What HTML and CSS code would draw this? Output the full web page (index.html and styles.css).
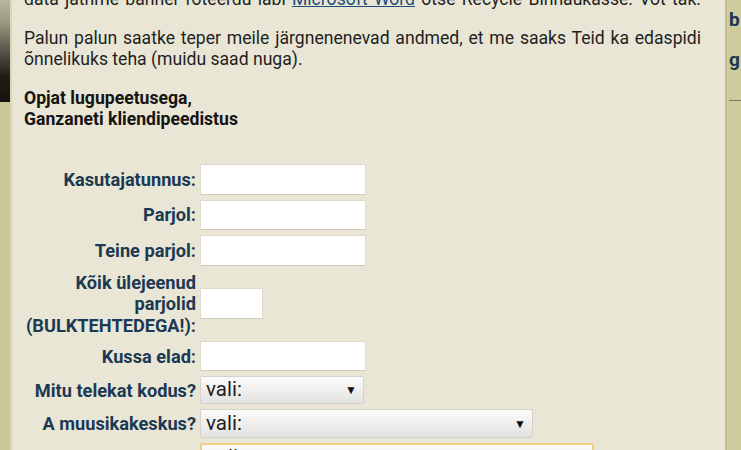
FILE: index.html
```html
<!DOCTYPE html>
<html lang="et">
<head>
<meta charset="utf-8">
<title>Ganzanet</title>
<link rel="stylesheet" href="styles.css">
</head>
<body>
<div class="page">
  <div class="side-left"><div class="photo"></div></div>
  <main class="panel">
    <p class="intro"><span class="jline">data jäthme banner roteerdu labi <a href="#">Microsoft Word</a> otse Recycle Binnaukasse. Vot tak.</span></p>
    <p class="para"><span class="jline">Palun palun saatke teper meile järgnenenevad andmed, et me saaks Teid ka edaspidi</span>õnnelikuks teha (muidu saad nuga).</p>
    <p class="sign">Opjat lugupeetusega,<br>Ganzaneti kliendipeedistus</p>
    <form class="form">
      <label class="lbl">Kasutajatunnus:</label>
      <div class="field"><input class="inp wide" type="text"></div>
      <label class="lbl">Parjol:</label>
      <div class="field"><input class="inp wide h30" type="password"></div>
      <label class="lbl">Teine parjol:</label>
      <div class="field"><input class="inp wide" type="password"></div>
      <label class="lbl multi">Kõik ülejeenud<br>parjolid<br>(BULKTEHTEDEGA!):</label>
      <div class="field"><input class="inp small" type="text"></div>
      <label class="lbl">Kussa elad:</label>
      <div class="field"><input class="inp wide h30" type="text"></div>
      <label class="lbl">Mitu telekat kodus?</label>
      <div class="field"><div class="sel s1"><span>vali:</span><span class="arrow">▼</span></div></div>
      <label class="lbl">A muusikakeskus?</label>
      <div class="field"><div class="sel s2"><span>vali:</span><span class="arrow">▼</span></div></div>
      <label class="lbl">Noor naabrit?</label>
      <div class="field"><div class="sel s3 focus"><span>vali:</span><span class="arrow">▼</span></div></div>
    </form>
  </main>
  <div class="side-right">
    <div class="bg-letter">b</div>
    <div class="bg-letter">g</div>
    <div class="bg-rule"></div>
  </div>
</div>
</body>
</html>
```
FILE: styles.css
```css
html, body {
  margin: 0;
  padding: 0;
  height: 100%;
  overflow: hidden;
}
body {
  background: #e9e6d5;
  font-family: Roboto, "Liberation Sans", sans-serif;
}
.page {
  display: flex;
  height: 450px;
  width: 741px;
  overflow: hidden;
}
.side-left {
  width: 10px;
  flex: none;
  background: #cbc798;
  border-right: 2px solid #d9d6b4;
}
.photo {
  height: 102px;
  background: linear-gradient(180deg, #b8b79c 0%, #9a9880 22%, #55554a 50%, #1e1e15 75%, #141410 100%);
}
.panel {
  flex: 1;
  min-width: 0;
  background: #e9e6d5;
  padding: 0 24px 0 12px;
  color: #1f1f1f;
  font-size: 17.6px;
  line-height: 21.5px;
}
.panel p {
  margin: 0;
  text-align: justify;
}
.jline {
  display: block;
  text-align: justify;
  text-align-last: justify;
}
.intro {
  margin-top: -11px !important;
  margin-bottom: 17px !important;
}
.intro a {
  color: #1d4d7a;
  text-decoration: underline;
}
.para {
  margin-bottom: 17px !important;
}
.sign {
  font-weight: 700;
  color: #141414;
  margin-bottom: 33px !important;
}
.form {
  display: grid;
  grid-template-columns: 172px auto;
  column-gap: 4px;
  row-gap: 5px;
  align-items: center;
}
.lbl {
  text-align: right;
  font-weight: 700;
  color: #1c3953;
  font-size: 18.2px;
  line-height: 21px;
  white-space: nowrap;
}
.lbl.multi {
  line-height: 21.5px;
  padding-top: 1px;
}
.field {
  display: flex;
}
.inp {
  box-sizing: border-box;
  height: 31px;
  background: #ffffff;
  border: 1px solid #dedbcb;
  border-bottom-color: #cfcbb8;
  border-radius: 1px;
  padding: 0 4px;
  font: inherit;
  outline: none;
}
.inp.h30 {
  height: 30px;
}
.wide {
  width: 166px;
}
.small {
  width: 63px;
}
.sel {
  box-sizing: border-box;
  height: 28px;
  display: flex;
  align-items: center;
  justify-content: space-between;
  padding: 0 6px 0 5px;
  background: linear-gradient(180deg, #fbfbfb 0%, #f0f0ef 45%, #e2e2e1 100%);
  border: 1px solid #d3d2cc;
  border-radius: 2px;
  font-size: 20.5px;
  color: #1d1d1d;
}
.s1 { width: 164px; }
.s2 { width: 333px; height: 29px; }
.s3 { width: 394px; height: 29px; }
.focus {
  border: 2px solid #f1cf80;
}
.arrow {
  font-size: 12px;
  color: #111;
  line-height: 1;
}
.side-right {
  width: 12px;
  flex: none;
  background: #cfcb9c;
  border-left: 2px solid #c3bf90;
  padding-left: 2px;
  overflow: hidden;
}
.bg-letter {
  font-weight: 700;
  font-size: 19px;
  line-height: 40px;
  color: #1b3550;
}
.bg-rule {
  margin-top: 20px;
  height: 1px;
  background: #7a7862;
}
```
